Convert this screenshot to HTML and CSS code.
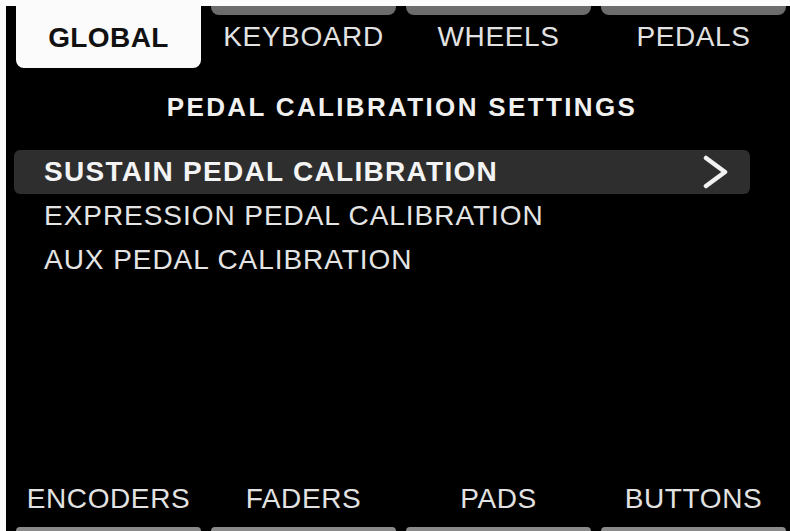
FILE: index.html
```html
<!DOCTYPE html>
<html lang="en">
<head>
  <meta charset="UTF-8">
  <meta name="viewport" content="width=device-width, initial-scale=1.0">
  <title>Pedal Calibration Settings</title>
  <link rel="stylesheet" href="styles.css">
</head>
<body>
<div class="screen">
  <div class="tabs top">
    <div class="tab active">GLOBAL</div>
    <div class="tab">KEYBOARD</div>
    <div class="tab">WHEELS</div>
    <div class="tab">PEDALS</div>
  </div>

  <h1 class="title">PEDAL CALIBRATION SETTINGS</h1>

  <ul class="menu">
    <li class="item selected">
      <span>SUSTAIN PEDAL CALIBRATION</span>
      <svg class="chevron" width="26" height="34" viewBox="0 0 26 34">
        <polyline points="3,3 22,17 3,31" fill="none" stroke="#f2f2f2" stroke-width="4.5" stroke-linecap="round" stroke-linejoin="round"/>
      </svg>
    </li>
    <li class="item">EXPRESSION PEDAL CALIBRATION</li>
    <li class="item">AUX PEDAL CALIBRATION</li>
  </ul>

  <div class="tabs bottom">
    <div class="tab">ENCODERS</div>
    <div class="tab">FADERS</div>
    <div class="tab">PADS</div>
    <div class="tab">BUTTONS</div>
  </div>
</div>
</body>
</html>
```

FILE: styles.css
```css
html, body {
  margin: 0;
  height: 100%;
  overflow: hidden;
}

body {
  background-color: #fbfbfb;
  font-family: "Liberation Sans", Arial, sans-serif;
  color: #e6e6e6;
}

.screen {
  margin: 6px 0 0 6px;
  height: 525px;
  background-color: #000;
  display: flex;
  flex-direction: column;
}

.tabs {
  display: grid;
  grid-template-columns: repeat(4, 1fr);
  gap: 10px;
  padding: 0 4px 0 10px;
}

.tab {
  position: relative;
  display: flex;
  align-items: center;
  justify-content: center;
  font-size: 28px;
  letter-spacing: 0.6px;
  color: #e2e2e2;
}

.tabs.top .tab {
  height: 62px;
}

.tabs.top .tab::before {
  content: "";
  position: absolute;
  top: 0;
  left: 0;
  right: 0;
  height: 9px;
  background-color: #6c6c6c;
  border-radius: 0 0 8px 8px;
}

.tabs.top .tab.active {
  margin-top: -6px;
  height: 68px;
  padding-top: 8px;
  box-sizing: border-box;
  background-color: #fbfbfb;
  color: #111;
  font-weight: bold;
  letter-spacing: 0.4px;
  border-radius: 0 0 8px 8px;
}

.tabs.top .tab.active::before {
  display: none;
}

.title {
  margin: 21px 0 25px;
  padding-left: 8px;
  line-height: 36px;
  font-size: 26px;
  font-weight: bold;
  letter-spacing: 2.35px;
  text-align: center;
  color: #f0f0f0;
}

.menu {
  list-style: none;
  margin: 0 40px 0 8px;
  padding: 0;
  flex: 1;
}

.item {
  height: 44px;
  display: flex;
  align-items: center;
  justify-content: space-between;
  padding: 0 21px 0 30px;
  font-size: 28px;
  letter-spacing: 0.95px;
  color: #e4e4e4;
}

.item.selected {
  background-color: #2e2e2e;
  border-radius: 6px;
  font-weight: bold;
  letter-spacing: 1.3px;
  color: #f4f4f4;
}

.chevron {
  display: block;
}

.tabs.bottom .tab {
  height: 60px;
  padding-bottom: 4px;
  box-sizing: border-box;
}

.tabs.bottom .tab::after {
  content: "";
  position: absolute;
  bottom: 0;
  left: 0;
  right: 0;
  height: 4px;
  background-color: #8a8a8a;
  border-radius: 4px 4px 0 0;
}
```
